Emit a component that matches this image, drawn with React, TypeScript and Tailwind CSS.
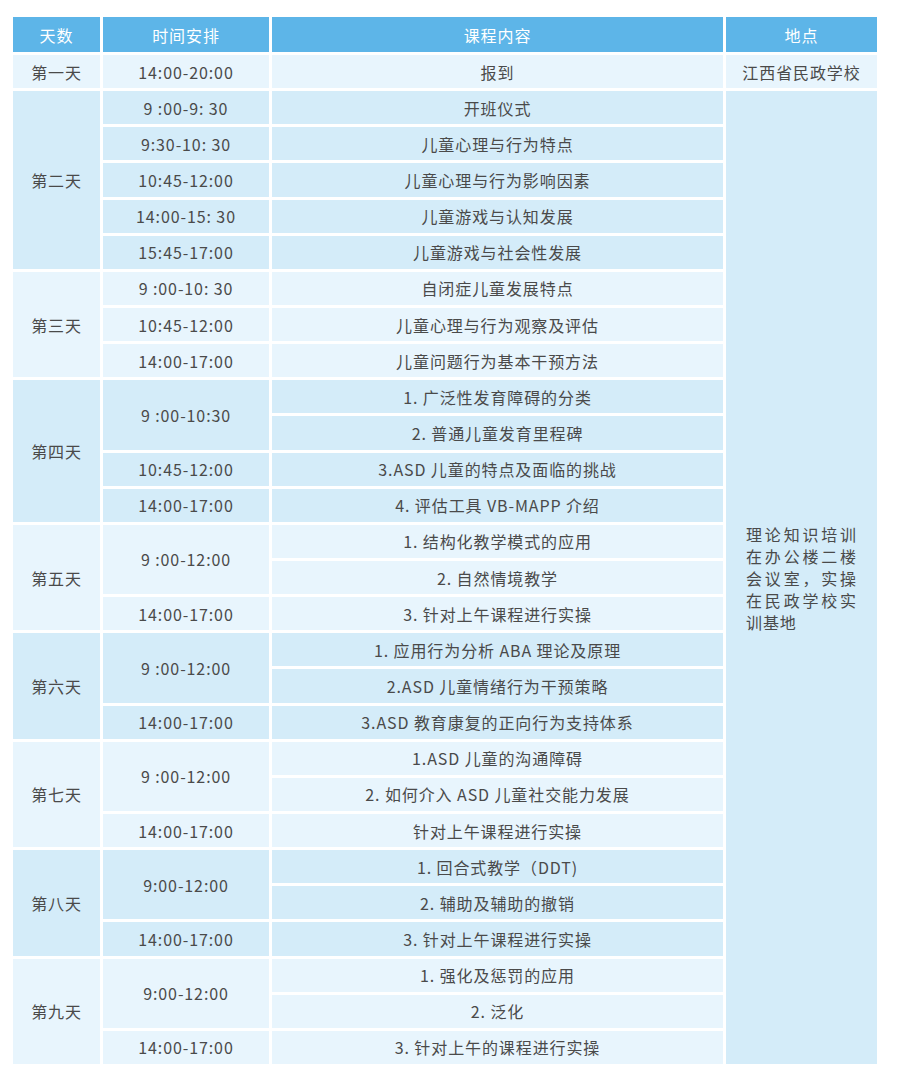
import React from "react";

type Row = { time?: string; span?: number; content: string };
type Day = { day: string; rows: Row[]; dark: boolean };

const days: Day[] = [
  {
    day: "第二天",
    dark: true,
    rows: [
      { time: "9 :00-9: 30", content: "开班仪式" },
      { time: "9:30-10: 30", content: "儿童心理与行为特点" },
      { time: "10:45-12:00", content: "儿童心理与行为影响因素" },
      { time: "14:00-15: 30", content: "儿童游戏与认知发展" },
      { time: "15:45-17:00", content: "儿童游戏与社会性发展" },
    ],
  },
  {
    day: "第三天",
    dark: false,
    rows: [
      { time: "9 :00-10: 30", content: "自闭症儿童发展特点" },
      { time: "10:45-12:00", content: "儿童心理与行为观察及评估" },
      { time: "14:00-17:00", content: "儿童问题行为基本干预方法" },
    ],
  },
  {
    day: "第四天",
    dark: true,
    rows: [
      { time: "9 :00-10:30", span: 2, content: "1. 广泛性发育障碍的分类" },
      { content: "2. 普通儿童发育里程碑" },
      { time: "10:45-12:00", content: "3.ASD 儿童的特点及面临的挑战" },
      { time: "14:00-17:00", content: "4. 评估工具 VB-MAPP 介绍" },
    ],
  },
  {
    day: "第五天",
    dark: false,
    rows: [
      { time: "9 :00-12:00", span: 2, content: "1. 结构化教学模式的应用" },
      { content: "2. 自然情境教学" },
      { time: "14:00-17:00", content: "3. 针对上午课程进行实操" },
    ],
  },
  {
    day: "第六天",
    dark: true,
    rows: [
      { time: "9 :00-12:00", span: 2, content: "1. 应用行为分析 ABA 理论及原理" },
      { content: "2.ASD 儿童情绪行为干预策略" },
      { time: "14:00-17:00", content: "3.ASD 教育康复的正向行为支持体系" },
    ],
  },
  {
    day: "第七天",
    dark: false,
    rows: [
      { time: "9 :00-12:00", span: 2, content: "1.ASD 儿童的沟通障碍" },
      { content: "2. 如何介入 ASD 儿童社交能力发展" },
      { time: "14:00-17:00", content: "针对上午课程进行实操" },
    ],
  },
  {
    day: "第八天",
    dark: true,
    rows: [
      { time: "9:00-12:00", span: 2, content: "1. 回合式教学（DDT)" },
      { content: "2. 辅助及辅助的撤销" },
      { time: "14:00-17:00", content: "3. 针对上午课程进行实操" },
    ],
  },
  {
    day: "第九天",
    dark: false,
    rows: [
      { time: "9:00-12:00", span: 2, content: "1. 强化及惩罚的应用" },
      { content: "2. 泛化" },
      { time: "14:00-17:00", content: "3. 针对上午的课程进行实操" },
    ],
  },
];

const daySpan: Record<number, string> = {
  3: "row-span-3",
  4: "row-span-4",
  5: "row-span-5",
};

const cell = "flex items-center justify-center text-center";

export default function App() {
  const dayBg = (dark: boolean) => (dark ? "bg-[#d4ecf9]" : "bg-[#e8f5fd]");
  return (
    <div
      className="w-[897px] h-[1077px] bg-white pt-[17px] pl-[13px] text-[16px] tracking-[0.9px] text-[#4a4a4a]"
      style={{ fontFamily: '"Noto Sans CJK SC", "Noto Sans", sans-serif' }}
    >
      <div className="grid grid-cols-[87px_166px_451px_151px] grid-rows-[35px_repeat(28,minmax(0,1fr))] gap-[3px] h-[1047px] w-[864px]">
        {["天数", "时间安排", "课程内容", "地点"].map((h) => (
          <div key={h} className={`${cell} bg-[#5db5e8] text-white`}>
            {h}
          </div>
        ))}
        <div className={`${cell} bg-[#e8f5fd]`}>第一天</div>
        <div className={`${cell} bg-[#e8f5fd]`}>14:00-20:00</div>
        <div className={`${cell} bg-[#e8f5fd]`}>报到</div>
        <div className={`${cell} bg-[#e8f5fd]`}>江西省民政学校</div>
        {days.map((d, di) => (
          <React.Fragment key={d.day}>
            <div className={`${cell} ${daySpan[d.rows.length]} ${dayBg(d.dark)}`}>
              {d.day}
            </div>
            {d.rows.map((r, ri) => (
              <React.Fragment key={ri}>
                {r.time !== undefined && (
                  <div
                    className={`${cell} ${r.span === 2 ? "row-span-2" : ""} ${dayBg(d.dark)}`}
                  >
                    {r.time}
                  </div>
                )}
                <div className={`${cell} ${dayBg(d.dark)}`}>{r.content}</div>
                {di === 0 && ri === 0 && (
                  <div className="row-span-27 flex items-center bg-[#d4ecf9] px-[20px]">
                    <div className="w-full text-justify leading-[22px]">
                      理论知识培训在办公楼二楼会议室，实操在民政学校实训基地
                    </div>
                  </div>
                )}
              </React.Fragment>
            ))}
          </React.Fragment>
        ))}
      </div>
    </div>
  );
}
